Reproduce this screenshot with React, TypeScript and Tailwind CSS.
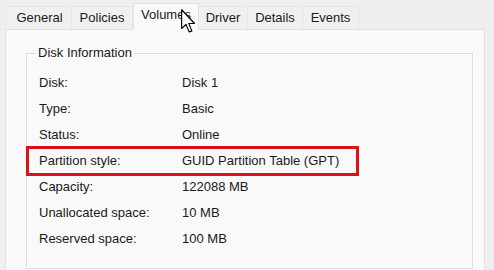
import type { ReactNode } from 'react';

const TABS = ['General', 'Policies', 'Volumes', 'Driver', 'Details', 'Events'];
const TAB_WIDTHS: Record<string, string> = {
  General: 'w-[64px]',
  Policies: 'w-[61px]',
  Volumes: 'w-[66px]',
  Driver: 'w-[49px]',
  Details: 'w-[55px]',
  Events: 'w-[56px]',
};

const ROWS = [
  { label: 'Disk:', value: 'Disk 1' },
  { label: 'Type:', value: 'Basic' },
  { label: 'Status:', value: 'Online' },
  { label: 'Partition style:', value: 'GUID Partition Table (GPT)', highlight: true },
  { label: 'Capacity:', value: '122088 MB' },
  { label: 'Unallocated space:', value: '10 MB' },
  { label: 'Reserved space:', value: '100 MB' },
];

export default function App() {
  return (
    <div
      className="relative h-[270px] w-[494px] overflow-hidden bg-[#efefef] text-[13px] text-[#1a1a1a]"
      style={{ fontFamily: '"Segoe UI", "Liberation Sans", Arial, sans-serif' }}
    >
      {/* Tab strip */}
      <div className="flex h-[29px] items-end pl-[8px]">
        {TABS.map((t) => {
          const active = t === 'Volumes';
          return (
            <div
              key={t}
              className={`flex items-center justify-center ${TAB_WIDTHS[t]} ${
                active
                  ? 'relative z-10 -mb-px h-[27px] border border-b-0 border-[#e2e2e2] bg-[#f9f9f9] pb-[4px]'
                  : 'h-[23px] border-t border-r border-[#e6e6e6] bg-[#f0f0f0] pb-px'
              }`}
            >
              {t}
            </div>
          );
        })}
      </div>

      {/* Property page */}
      <div className="ml-[5px] h-[260px] w-[480px] border border-[#e2e2e2] bg-[#f9f9f9] pl-[20px] pr-[11px] pt-[15px]">
        <fieldset className="h-[224px] w-[447px] border border-[#dedede] shadow-[inset_1px_1px_0_#ffffff,1px_1px_0_#ffffff]">
          <legend className="ml-[9px] px-[2px] leading-[16px]">Disk Information</legend>
          <div className="pt-[9px]">
            {ROWS.map((r) => (
              <Row key={r.label} label={r.label} highlight={r.highlight}>
                {r.value}
              </Row>
            ))}
          </div>
        </fieldset>
      </div>

      {/* Mouse pointer over the Volumes tab */}
      <svg
        className="absolute left-[181px] top-[9px] z-20"
        width="15"
        height="24"
        viewBox="0 0 12 19"
      >
        <path
          d="M0.5 0.5 L0.5 15.5 L4 12.2 L6.6 18.3 L8.7 17.4 L6.2 11.5 L10.8 11.5 Z"
          fill="#ffffff"
          stroke="#000000"
          strokeWidth="0.9"
          strokeLinejoin="round"
        />
      </svg>
    </div>
  );
}

function Row({ label, highlight, children }: { label: string; highlight?: boolean; children: ReactNode }) {
  return (
    <div
      className={`flex h-[26px] items-center ${
        highlight
          ? 'ml-[1px] w-[329px] pl-[11px] outline-3 -outline-offset-1 outline-[#da121c]'
          : 'pl-[12px]'
      }`}
    >
      <span className="w-[143px]">{label}</span>
      <span>{children}</span>
    </div>
  );
}
